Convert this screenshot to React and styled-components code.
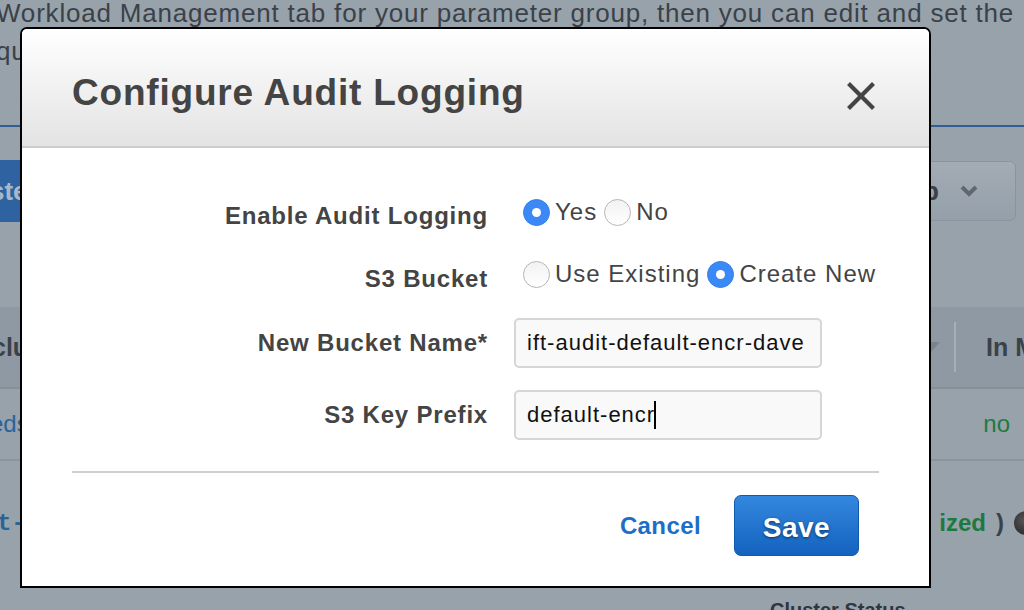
import React from 'react';
import styled, { createGlobalStyle } from 'styled-components';

const GlobalStyle = createGlobalStyle`
  html, body {
    margin: 0;
    padding: 0;
    background: #98a2ab;
    overflow: hidden;
  }
  body {
    font-family: "Liberation Sans", Arial, Helvetica, sans-serif;
  }
`;

/* ---------- dimmed console page behind the dialog ---------- */

const Page = styled.div`
  width: 1024px;
  height: 610px;
  background: #98a2ab;
  color: #3b4148;
  overflow: hidden;
`;

const Intro = styled.p`
  margin: -6px 0 0 -4px;
  font-size: 26px;
  letter-spacing: 0.8px;
  line-height: 38px;
  white-space: nowrap;
  color: #3b4148;
`;

const Rule = styled.div`
  margin-top: 55px;
  height: 2px;
  background: #2f5f93;
`;

const Toolbar = styled.div`
  display: flex;
  justify-content: space-between;
  align-items: center;
  margin-top: 33px;
  padding-right: 8px;
`;

const LaunchButton = styled.div`
  height: 62px;
  width: 120px;
  margin-left: -70px;
  background: #2e62a0;
  border-radius: 6px;
  color: #a9b8c9;
  font-size: 26px;
  font-weight: bold;
  display: flex;
  align-items: center;
  padding-left: 60px;
  box-sizing: border-box;
`;

const MenuButton = styled.div`
  height: 60px;
  width: 130px;
  border: 1px solid #8a949e;
  border-radius: 6px;
  background: linear-gradient(#a3acb5, #959fa9);
  display: flex;
  align-items: center;
  justify-content: flex-end;
  gap: 20px;
  padding-right: 36px;
  box-sizing: border-box;
  font-size: 26px;
  font-weight: bold;
  color: #3b4148;
`;

const Table = styled.div`
  margin-top: 85px;
`;

const HeaderRow = styled.div`
  height: 80px;
  background: #8f99a3;
  border-bottom: 2px solid #858f99;
  display: flex;
  align-items: center;
  justify-content: space-between;
  font-size: 25px;
  font-weight: bold;
  color: #3b4148;
`;

const Row = styled.div`
  height: ${p => p.$h}px;
  border-bottom: ${p => (p.$line ? '2px solid #8a949e' : 'none')};
  display: flex;
  align-items: center;
  justify-content: space-between;
  font-size: 24px;
`;

const Cell = styled.span`
  color: ${p => p.$color || '#3b4148'};
  font-weight: ${p => (p.$bold ? 'bold' : 'normal')};
  font-family: ${p => (p.$mono ? '"Liberation Mono", monospace' : 'inherit')};
  margin: ${p => p.$m || '0'};
  display: flex;
  align-items: center;
  gap: 10px;
`;

const SortDivider = styled.span`
  width: 2px;
  height: 50px;
  background: #a6afb8;
  margin: 0 20px 0 4px;
`;

const Dot = styled.span`
  width: 24px;
  height: 24px;
  border-radius: 50%;
  background: radial-gradient(circle at 40% 40%, #555, #2d2d2d 70%, #6b4a2a);
  margin-right: -14px;
`;

const Footnote = styled.div`
  margin: 14px 0 0 770px;
  font-size: 20px;
  font-weight: bold;
  color: #30363c;
`;

/* ---------- dialog ---------- */

const Dialog = styled.div`
  position: fixed;
  left: 20px;
  top: 27px;
  width: 911px;
  box-sizing: border-box;
  border: 2px solid #000;
  border-radius: 7px 7px 0 0;
  background: #fff;
  overflow: hidden;
`;

const DialogHeader = styled.div`
  height: 117px;
  background: linear-gradient(#ffffff, #e3e3e3);
  border-bottom: 2px solid #cccccc;
  display: flex;
  align-items: center;
  justify-content: space-between;
  padding: 0 54px 0 50px;
`;

const Title = styled.h1`
  margin: 10px 0 0;
  font-size: 37px;
  font-weight: bold;
  color: #444;
  letter-spacing: 0.8px;
`;

const CloseButton = styled.button`
  border: 0;
  background: none;
  padding: 0;
  margin-top: 16px;
  display: flex;
  cursor: pointer;
`;

const DialogBody = styled.div`
  padding: 44px 50px 30px 50px;
`;

const Form = styled.div`
  display: grid;
  grid-template-columns: 418px 1fr;
  column-gap: 24px;
  row-gap: 22px;
  align-items: center;
`;

const Label = styled.div`
  text-align: right;
  font-size: 24px;
  letter-spacing: 0.8px;
  font-weight: bold;
  color: #444;
  margin: ${p => (p.$shift ? '6px 2px 0 0' : '0 2px 0 0')};
`;

const Options = styled.div`
  display: flex;
  align-items: center;
  height: 44px;
  margin: ${p => (p.$up ? '-4px 0 0 9px' : '-2px 0 0 9px')};
  gap: 7px;
`;

const Option = styled.label`
  display: flex;
  align-items: center;
  gap: 5px;
  font-size: 24px;
  letter-spacing: 1px;
  white-space: nowrap;
  color: #444;
`;

const Radio = styled.span`
  width: 27px;
  height: 27px;
  flex: none;
  border-radius: 50%;
  box-sizing: border-box;
  display: flex;
  align-items: center;
  justify-content: center;
  background: ${p => (p.$on ? '#3a89f6' : 'linear-gradient(#f2f2f2, #ffffff)')};
  border: ${p => (p.$on ? '1px solid #3480ea' : '1px solid #b5b5b5')};

  &::after {
    content: '';
    display: ${p => (p.$on ? 'block' : 'none')};
    width: 9px;
    height: 9px;
    border-radius: 50%;
    background: #fff;
  }
`;

const Field = styled.div`
  width: 308px;
  height: 50px;
  box-sizing: border-box;
  border: 2px solid #d6d6d6;
  border-radius: 5px;
  background: #f9f9f9;
  padding: 0 11px;
  display: flex;
  align-items: center;
  font-size: 22px;
  letter-spacing: 1px;
  color: #111;
  white-space: nowrap;
  overflow: hidden;
`;

const Caret = styled.span`
  display: inline-block;
  width: 2px;
  height: 28px;
  background: #000;
  margin-left: -1px;
`;

const Divider = styled.hr`
  margin: 31px 0 0;
  border: 0;
  height: 2px;
  background: #cfcfcf;
`;

const Footer = styled.div`
  display: flex;
  justify-content: flex-end;
  align-items: center;
  gap: 33px;
  margin-top: 22px;
  padding-right: 20px;
`;

const CancelLink = styled.a`
  font-size: 24px;
  letter-spacing: 0.4px;
  font-weight: bold;
  color: #1d6ec7;
  text-decoration: none;
`;

const SaveButton = styled.button`
  width: 125px;
  height: 61px;
  border: 1px solid #1059ad;
  border-radius: 7px;
  background: linear-gradient(#3487de, #1363bf);
  color: #fff;
  font-family: inherit;
  font-size: 28px;
  letter-spacing: 0.5px;
  font-weight: bold;
  text-shadow: 0 1px 3px rgba(0, 0, 0, 0.55);
  padding: 4px 0 0;
  cursor: pointer;
`;

const CloseIcon = () => (
  <svg width="28" height="28" viewBox="0 0 28 28">
    <path d="M3 3 L25 25 M25 3 L3 25" stroke="#444" strokeWidth="4.2" strokeLinecap="square" />
  </svg>
);

const ChevronDown = ({ color = '#5f6871' }) => (
  <svg width="20" height="14" viewBox="0 0 20 14">
    <path d="M3 3 L10 10 L17 3" fill="none" stroke={color} strokeWidth="4" />
  </svg>
);

const SortArrow = () => (
  <svg width="18" height="10" viewBox="0 0 18 10">
    <path d="M0 0 H18 L9 10 Z" fill="#7a848e" />
  </svg>
);

export default function App() {
  return (
    <>
      <GlobalStyle />
      <Page>
        <Intro>
          Workload Management tab for your parameter group, then you can edit and set the
          <br />
          queue
        </Intro>
        <Rule />
        <Toolbar>
          <LaunchButton>ste</LaunchButton>
          <MenuButton>
            <span>p</span>
            <ChevronDown />
          </MenuButton>
        </Toolbar>
        <Table>
          <HeaderRow>
            <Cell $bold $m="0 0 0 -8px">clu</Cell>
            <Cell $bold $m="0 -12px 0 0">
              <SortArrow />
              <SortDivider />
              In M
            </Cell>
          </HeaderRow>
          <Row $h={70} $line>
            <Cell $color="#2b6299" $m="0 0 0 -10px">eds</Cell>
            <Cell $color="#1d7a3e" $m="0 14px 0 0">no</Cell>
          </Row>
          <Row $h={124}>
            <Cell $mono $bold $color="#2b6299" $m="0 0 0 -3px">t-</Cell>
            <Cell $bold $color="#1d7a3e">
              ized <span style={{ color: '#3b4148' }}>)</span>
              <Dot />
            </Cell>
          </Row>
        </Table>
        <Footnote>Cluster Status</Footnote>
      </Page>

      <Dialog role="dialog" aria-label="Configure Audit Logging">
        <DialogHeader>
          <Title>Configure Audit Logging</Title>
          <CloseButton aria-label="Close">
            <CloseIcon />
          </CloseButton>
        </DialogHeader>
        <DialogBody>
          <Form>
            <Label $shift>Enable Audit Logging</Label>
            <Options>
              <Option><Radio $on />Yes</Option>
              <Option><Radio />No</Option>
            </Options>

            <Label $shift>S3 Bucket</Label>
            <Options $up>
              <Option><Radio />Use Existing</Option>
              <Option><Radio $on />Create New</Option>
            </Options>

            <Label>New Bucket Name*</Label>
            <Field>ift-audit-default-encr-dave</Field>

            <Label>S3 Key Prefix</Label>
            <Field>default-encr<Caret /></Field>
          </Form>
          <Divider />
          <Footer>
            <CancelLink href="#">Cancel</CancelLink>
            <SaveButton>Save</SaveButton>
          </Footer>
        </DialogBody>
      </Dialog>
    </>
  );
}
